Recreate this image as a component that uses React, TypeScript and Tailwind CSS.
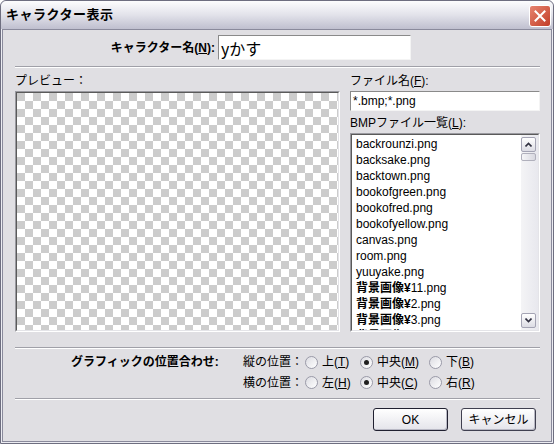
import React from "react";

const font = "font-['Liberation_Sans','Noto_Sans_CJK_JP',sans-serif]";

const files: { bold?: string; name: string }[] = [
  { name: "backrounzi.png" },
  { name: "backsake.png" },
  { name: "backtown.png" },
  { name: "bookofgreen.png" },
  { name: "bookofred.png" },
  { name: "bookofyellow.png" },
  { name: "canvas.png" },
  { name: "room.png" },
  { name: "yuuyake.png" },
  { bold: "背景画像¥", name: "11.png" },
  { bold: "背景画像¥", name: "2.png" },
  { bold: "背景画像¥", name: "3.png" },
  { bold: "背景画像¥", name: "05.png" },
];

function Radio({ checked }: { checked?: boolean }) {
  return (
    <span className="w-[13px] h-[13px] rounded-full border border-[#9a9aa8] bg-gradient-to-br from-[#dcdce2] to-white flex items-center justify-center shrink-0">
      {checked && <span className="w-[5px] h-[5px] rounded-full bg-[#202020]" />}
    </span>
  );
}

function Option({ label, mn, checked, w }: { label: string; mn: string; checked?: boolean; w: string }) {
  return (
    <div className={`flex items-center gap-[4px] ${w}`}>
      <Radio checked={checked} />
      <span>
        {label}(<span className="underline">{mn}</span>)
      </span>
    </div>
  );
}

function Separator() {
  return <div className="h-[2px] border-t border-t-[#a0a0a8] border-b border-b-white" />;
}

function Sunken({ className, children }: { className: string; children?: React.ReactNode }) {
  return (
    <div className={`border border-t-[#9a9aa0] border-l-[#9a9aa0] border-r-white border-b-white ${className}`}>
      <div className="w-full h-full border border-t-[#5a5a5a] border-l-[#5a5a5a] border-r-[#e4e4e8] border-b-[#e4e4e8] bg-white overflow-hidden relative">
        {children}
      </div>
    </div>
  );
}

export default function App() {
  return (
    <div className={`w-[554px] h-[444px] border border-[#6e6e80] rounded-t-[6px] flex flex-col bg-[#ececf2] text-[12px] text-black ${font}`}>
      {/* title bar */}
      <div className="h-[28px] shrink-0 rounded-t-[6px] bg-gradient-to-b from-[#fdfdfe] via-[#e2e2ea] to-[#bfbfcf] flex items-center justify-between pl-[5px] pr-[2px]">
        <span className="font-bold text-[13px] tracking-[0.5px]">キャラクター表示</span>
        <div className="w-[22px] h-[22px] rounded-[3px] border border-white bg-gradient-to-br from-[#e6836f] to-[#c23b25] flex items-center justify-center mt-[1px]">
          <svg width="12" height="12" viewBox="0 0 12 12">
            <path d="M1.5 1.5 L10.5 10.5 M10.5 1.5 L1.5 10.5" stroke="white" strokeWidth="2" strokeLinecap="square" />
          </svg>
        </div>
      </div>

      {/* body */}
      <div className="flex-1 px-[1px] pb-[1px] flex flex-col">
        <div className="flex-1 border border-[#8a8a9c] bg-[#e0dfe3] pl-[12px] pr-[11px] flex flex-col">
          {/* name row */}
          <div className="mt-[5px] h-[25px] flex items-center">
            <div className="w-[200px] text-right font-bold">
              キャラクター名(<span className="underline">N</span>):
            </div>
            <div className="ml-[3px] w-[193px] h-[25px] border border-t-[#8a8a8a] border-l-[#8a8a8a] border-r-[#f4f4f4] border-b-[#f4f4f4] bg-white flex items-center pl-[2px] text-[16px] font-['Noto_Sans_CJK_JP',sans-serif]">
              yかす
            </div>
          </div>

          <div className="mt-[6px]">
            <Separator />
          </div>

          {/* main columns */}
          <div className="flex gap-[10px] mt-[5px]">
            <div className="w-[325px] flex flex-col">
              <div className="h-[18px] leading-[16px]">プレビュー：</div>
              <Sunken className="h-[241px]">
                <div className="absolute inset-0 bg-[image:conic-gradient(#ffffff_25%,#cccccc_0_50%,#ffffff_0_75%,#cccccc_0)] bg-[length:16px_16px]" />
              </Sunken>
            </div>

            <div className="w-[190px] flex flex-col">
              <div className="h-[18px] leading-[16px]">
                ファイル名(<span className="underline">F</span>):
              </div>
              <div className="h-[20px] border border-t-[#8a8a8a] border-l-[#8a8a8a] border-r-[#f4f4f4] border-b-[#f4f4f4] bg-white flex items-center pl-[2px]">
                *.bmp;*.png
              </div>
              <div className="mt-[4px] h-[18px] leading-[16px]">
                BMPファイル一覧(<span className="underline">L</span>):
              </div>
              <Sunken className="h-[199px]">
                <div className="flex h-full">
                  <div className="flex-1 pl-[4px] pt-[1px] overflow-hidden">
                    {files.map((f, i) => (
                      <div key={i} className="h-[16px] leading-[16px] whitespace-nowrap">
                        {f.bold && <span className="font-bold">{f.bold}</span>}
                        {f.name}
                      </div>
                    ))}
                  </div>
                  <div className="w-[17px] h-full py-[2px] pr-[2px] flex flex-col bg-gradient-to-r from-[#f4f4f6] to-[#e8e8ee]">
                    <div className="h-[15px] rounded-[2px] border border-[#a4a4b4] bg-gradient-to-b from-white to-[#dcdce4] flex items-center justify-center">
                      <svg width="7" height="5" viewBox="0 0 7 5">
                        <path d="M0.5 4.5 L3.5 1.5 L6.5 4.5" stroke="#303040" strokeWidth="1.6" fill="none" />
                      </svg>
                    </div>
                    <div className="mt-[1px] h-[8px] rounded-[2px] border border-[#b0b0bc] bg-gradient-to-r from-[#f6f6f8] to-[#d8d8e0]" />
                    <div className="flex-1" />
                    <div className="h-[15px] rounded-[2px] border border-[#a4a4b4] bg-gradient-to-b from-white to-[#dcdce4] flex items-center justify-center">
                      <svg width="7" height="5" viewBox="0 0 7 5">
                        <path d="M0.5 0.5 L3.5 3.5 L6.5 0.5" stroke="#303040" strokeWidth="1.6" fill="none" />
                      </svg>
                    </div>
                  </div>
                </div>
              </Sunken>
            </div>
          </div>

          <div className="mt-[15px]">
            <Separator />
          </div>

          {/* alignment */}
          <div className="mt-[3px] flex">
            <div className="ml-[56px] w-[172px] h-[20px] leading-[20px] font-bold">グラフィックの位置合わせ:</div>
            <div className="flex flex-col">
              <div className="h-[20px] flex items-center">
                <span className="w-[62px]">縦の位置：</span>
                <Option label="上" mn="T" w="w-[55px]" />
                <Option label="中央" mn="M" checked w="w-[69px]" />
                <Option label="下" mn="B" w="w-[60px]" />
              </div>
              <div className="h-[21px] flex items-center">
                <span className="w-[62px]">横の位置：</span>
                <Option label="左" mn="H" w="w-[55px]" />
                <Option label="中央" mn="C" checked w="w-[69px]" />
                <Option label="右" mn="R" w="w-[60px]" />
              </div>
            </div>
          </div>

          <div className="mt-[5px]">
            <Separator />
          </div>

          {/* buttons */}
          <div className="mt-[8px] flex justify-end gap-[13px] pr-[4px]">
            <button className="w-[75px] h-[23px] rounded-[3px] border border-[#202030] bg-gradient-to-b from-white to-[#e4e4ea] shadow-[inset_-1px_-1px_0_#b8b8c4]">
              OK
            </button>
            <button className="w-[75px] h-[23px] rounded-[3px] border border-[#404050] bg-gradient-to-b from-white to-[#e4e4ea] shadow-[inset_-1px_-1px_0_#b8b8c4]">
              キャンセル
            </button>
          </div>
        </div>
      </div>
    </div>
  );
}
